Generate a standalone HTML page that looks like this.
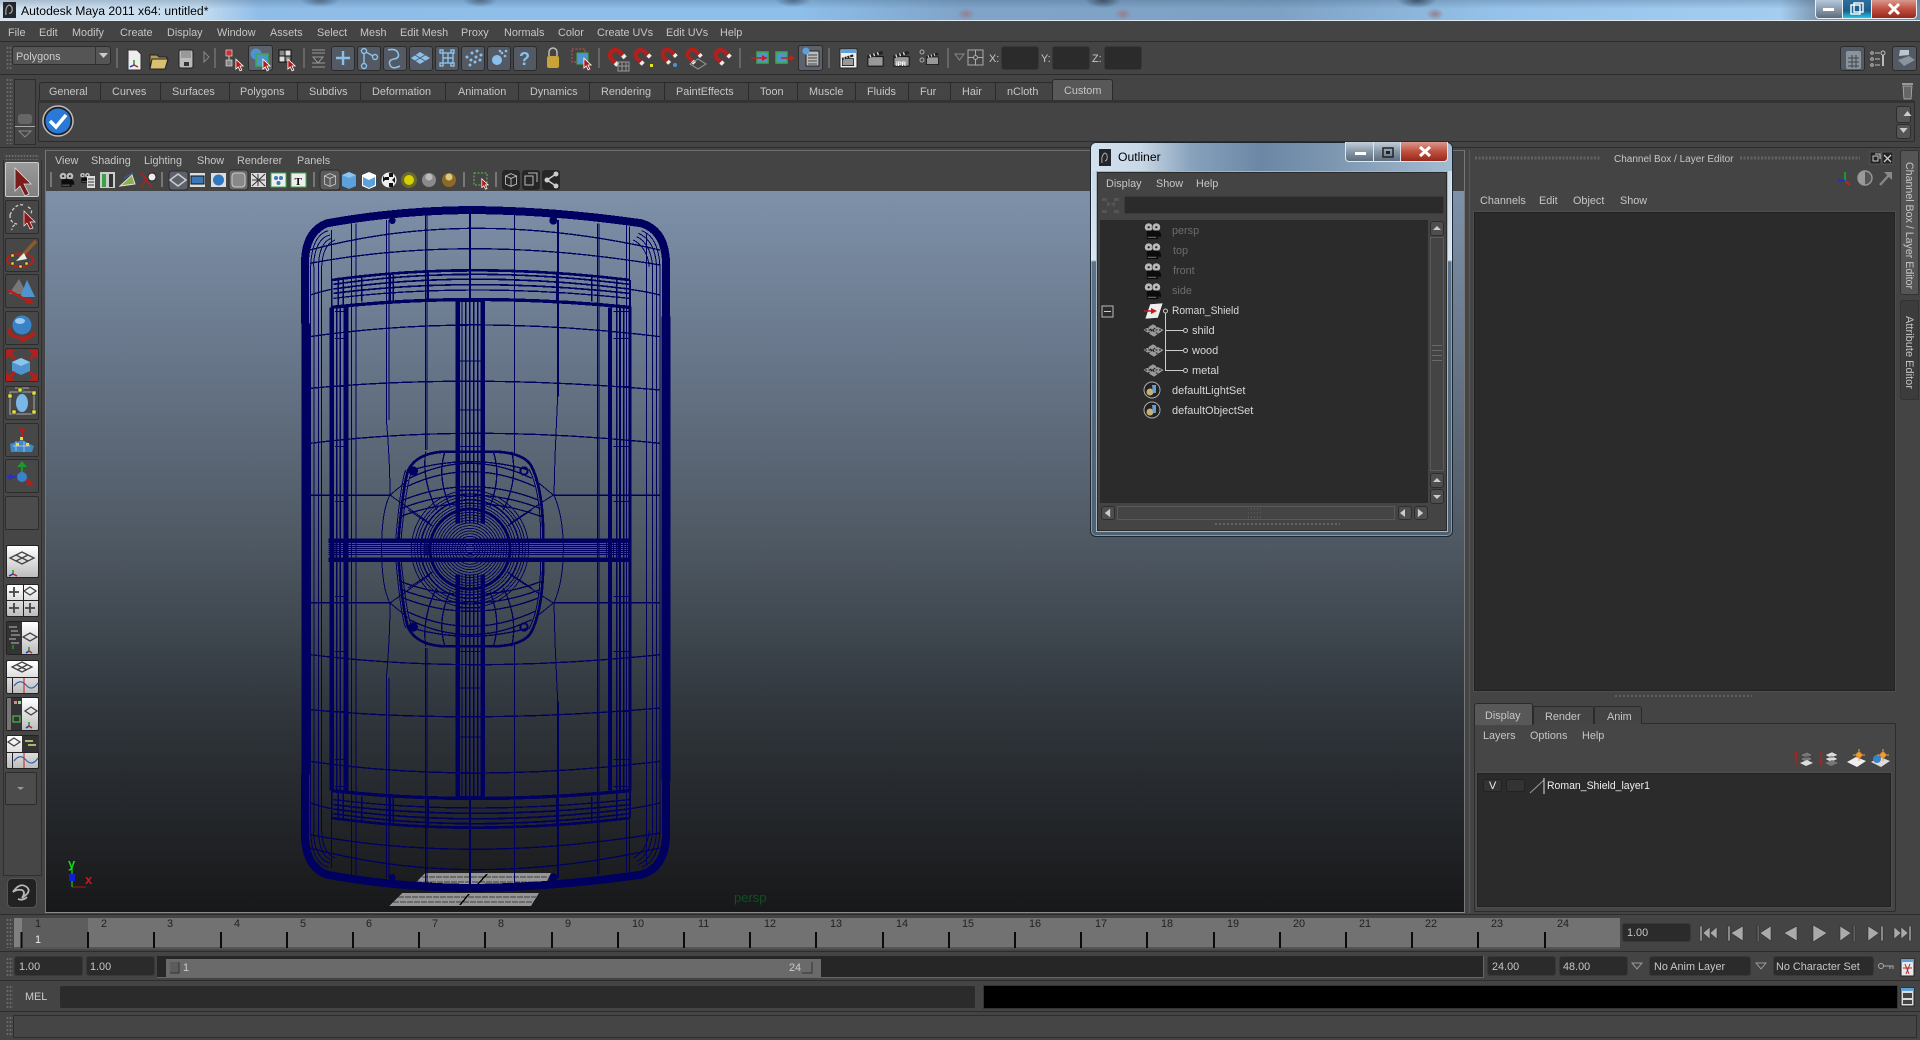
<!DOCTYPE html>
<html lang="en"><head><meta charset="utf-8"><title>Autodesk Maya 2011</title>
<style>
html,body{margin:0;padding:0;width:1920px;height:1040px;overflow:hidden;background:#444}
.a{position:absolute;box-sizing:border-box}
svg.o{position:absolute;left:0;top:0;width:1920px;height:1040px}
svg text{font:10.85px "Liberation Sans",sans-serif;fill:#c6c6c6}
svg text.d{fill:#222}
svg text.g{fill:#6c6c6c}
svg text.w{fill:#eee}
.f{background:#2b2b2b;border:1px solid #383838;border-radius:3px}
.b{background:#4b4b4b;border:1px solid #2d2d2d;border-radius:3px}
.tb{background:#535a63;border:1px solid #2b2b2b;border-radius:3px}
.grip{background-image:radial-gradient(#6a6a6a 0.8px,transparent 1px);background-size:3px 4px}
.ln{background:#2c2c2c}
.tab{top:82px;height:18px;background:#444;border-top:1px solid #2a2a2a;border-left:1px solid #2a2a2a}
.lay{left:6px;width:33px;background:linear-gradient(#fff,#bdbdbd);border:1px solid #222;border-radius:2px}
.tool{left:5px;width:34px;background:#474747;border:1px solid #2c2c2c;border-radius:2px}
</style></head><body>

<!-- title bar -->
<div class="a" style="left:0;top:0;width:1920px;height:21px;border-bottom:1px solid #dfe9f2;background:
radial-gradient(ellipse 20px 7px at 320px 0,#4f6a86,transparent),
radial-gradient(ellipse 18px 7px at 480px 0,#4f6a86,transparent),
radial-gradient(ellipse 18px 7px at 793px 0,#4f6a86,transparent),
radial-gradient(ellipse 18px 8px at 1103px 0,#3c5268,transparent),
radial-gradient(ellipse 20px 8px at 1417px 0,#3c5268,transparent),
radial-gradient(ellipse 9px 6px at 966px 14px,#96808e,transparent),
radial-gradient(ellipse 9px 6px at 1123px 14px,#96808e,transparent),
radial-gradient(ellipse 9px 6px at 1435px 14px,#96808e,transparent),
linear-gradient(rgba(60,90,120,.28),rgba(60,90,120,0) 9px),
linear-gradient(90deg,#d4e3ef 0,#c4dcf0 200px,#8fbde8 260px,#8ebeea 800px,#80a4c8 960px,#7ea2c4 1280px,#96c2ea 1500px,#a4cdf0 1780px,#7f9ab4 1815px,#6f8aa4 1920px)"></div>
<div class="a" style="left:1815px;top:0;width:28px;height:19px;background:linear-gradient(#b4c8dc,#8c9cac 50%,#5c6c7c);border:1px solid #e8f0f6;border-top:0;border-radius:0 0 0 4px"></div>
<div class="a" style="left:1843px;top:0;width:28px;height:19px;background:linear-gradient(#2f6f9f,#1c5d8a 60%,#20c8e8);border-bottom:1px solid #e8f0f6"></div>
<div class="a" style="left:1871px;top:0;width:46px;height:19px;background:linear-gradient(#d89a8c,#c05040 50%,#96281c);border:1px solid #e8f0f6;border-top:0;border-radius:0 0 4px 0"></div>

<!-- horizontal dividers -->
<div class="a ln" style="left:0;top:41px;width:1920px;height:1px"></div>
<div class="a ln" style="left:0;top:74px;width:1920px;height:1px"></div>
<div class="a ln" style="left:0;top:147px;width:1920px;height:1px"></div>
<div class="a" style="left:46px;top:150px;width:1418px;height:1px;background:#6e6e6e"></div>

<!-- toolbar pieces -->
<div class="a b" style="left:12px;top:46px;width:99px;height:19px;background:#555"></div>
<div class="a" style="left:95px;top:47px;width:1px;height:17px;background:#333"></div>
<div class="a grip" style="left:6px;top:46px;width:6px;height:24px"></div>
<div class="a tb" style="left:248px;top:45px;width:25px;height:26px;background:#5b626c"></div>
<div class="a tb" style="left:331px;top:46px;width:24px;height:25px"></div>
<div class="a tb" style="left:357px;top:46px;width:24px;height:25px"></div>
<div class="a tb" style="left:383px;top:46px;width:24px;height:25px"></div>
<div class="a tb" style="left:409px;top:46px;width:24px;height:25px"></div>
<div class="a tb" style="left:435px;top:46px;width:24px;height:25px"></div>
<div class="a tb" style="left:461px;top:46px;width:24px;height:25px"></div>
<div class="a tb" style="left:487px;top:46px;width:24px;height:25px"></div>
<div class="a tb" style="left:513px;top:46px;width:24px;height:25px"></div>
<div class="a tb" style="left:798px;top:45px;width:25px;height:26px;background:#5b626c"></div>
<div class="a f" style="left:1001px;top:46px;width:38px;height:24px"></div>
<div class="a f" style="left:1052px;top:46px;width:38px;height:24px"></div>
<div class="a f" style="left:1104px;top:46px;width:38px;height:24px"></div>
<div class="a tb" style="left:1840px;top:46px;width:25px;height:25px"></div>
<div class="a tb" style="left:1892px;top:46px;width:25px;height:25px"></div>

<!-- shelf -->
<div class="a grip" style="left:6px;top:78px;width:7px;height:66px"></div>
<div class="a" style="left:14px;top:79px;width:22px;height:66px;border:1px solid #2d2d2d;background:#464646"></div>
<div class="a" style="left:18px;top:114px;width:14px;height:10px;background:#666;border-radius:3px"></div>
<div class="a" style="left:15px;top:126px;width:20px;height:1px;background:#aaa"></div>
<div class="a tab" style="left:39px;width:62px;border-radius:3px 0 0 0"></div>
<div class="a tab" style="left:100px;width:61px"></div>
<div class="a tab" style="left:160px;width:70px"></div>
<div class="a tab" style="left:229px;width:69px"></div>
<div class="a tab" style="left:297px;width:64px"></div>
<div class="a tab" style="left:360px;width:86px"></div>
<div class="a tab" style="left:445px;width:74px"></div>
<div class="a tab" style="left:518px;width:72px"></div>
<div class="a tab" style="left:589px;width:76px"></div>
<div class="a tab" style="left:664px;width:85px"></div>
<div class="a tab" style="left:748px;width:50px"></div>
<div class="a tab" style="left:797px;width:59px"></div>
<div class="a tab" style="left:855px;width:54px"></div>
<div class="a tab" style="left:908px;width:43px"></div>
<div class="a tab" style="left:950px;width:46px"></div>
<div class="a tab" style="left:995px;width:58px"></div>
<div class="a" style="left:1052px;top:79px;width:61px;height:22px;background:#585858;border:1px solid #2a2a2a;border-bottom:0;border-radius:3px 3px 0 0"></div>
<div class="a" style="left:38px;top:100px;width:1877px;height:42px;border:1px solid #2c2c2c;border-top:3px solid #333;border-radius:2px;background:#444"></div>
<div class="a b" style="left:1896px;top:106px;width:15px;height:17px;background:#555"></div>
<div class="a b" style="left:1896px;top:124px;width:15px;height:15px;background:#555"></div>

<!-- viewport panel -->
<div class="a" style="left:46px;top:191px;width:1418px;height:721px;background:linear-gradient(#7e91a9 0,#667487 25%,#4d5761 50%,#30363c 72%,#1a1b1d 97%,#17181a 100%)"></div>
<div class="a" style="left:45px;top:150px;width:1px;height:763px;background:#777"></div>
<div class="a" style="left:1464px;top:150px;width:1px;height:763px;background:#777"></div>
<div class="a" style="left:45px;top:912px;width:1420px;height:1px;background:#8a8a8a"></div>

<!-- left tool column -->
<div class="a grip" style="left:5px;top:154px;width:34px;height:6px"></div>
<div class="a" style="left:3px;top:160px;width:39px;height:716px;border:1px solid #2f2f2f;border-top:0;background:#464646"></div>
<div class="a tool" style="top:162px;height:35px;background:linear-gradient(#9a9a9a,#808080);border-color:#ccc"></div>
<div class="a tool" style="top:200px;height:34px"></div>
<div class="a tool" style="top:238px;height:34px"></div>
<div class="a tool" style="top:274px;height:34px"></div>
<div class="a tool" style="top:311px;height:34px"></div>
<div class="a tool" style="top:348px;height:34px"></div>
<div class="a tool" style="top:386px;height:34px"></div>
<div class="a tool" style="top:423px;height:34px"></div>
<div class="a tool" style="top:459px;height:34px"></div>
<div class="a tool" style="top:496px;height:34px;background:#4c4c4c"></div>
<div class="a lay" style="top:545px;height:33px"></div>
<div class="a lay" style="top:584px;height:33px"></div>
<div class="a lay" style="top:621px;height:34px"></div>
<div class="a lay" style="top:660px;height:34px"></div>
<div class="a lay" style="top:697px;height:34px"></div>
<div class="a lay" style="top:735px;height:34px"></div>
<div class="a tool" style="top:772px;width:32px;height:33px;background:#4c4c4c"></div>
<div class="a" style="left:7px;top:878px;width:30px;height:30px;background:#222;border:1px solid #555;border-radius:5px"></div>

<!-- right panel -->
<div class="a" style="left:1469px;top:150px;width:1px;height:763px;background:#5a5a5a"></div>
<div class="a" style="left:1474px;top:212px;width:421px;height:479px;background:#2b2b2b;border:1px solid #222;outline:1px solid #4e4e4e"></div>
<div class="a" style="left:1900px;top:150px;width:19px;height:145px;background:#555;border:1px solid #333;border-radius:3px 0 0 3px"></div>
<div class="a" style="left:1900px;top:300px;width:19px;height:100px;background:#3c3c3c;border:1px solid #333;border-radius:3px 0 0 3px"></div>
<div class="a" style="left:1474px;top:723px;width:422px;height:189px;background:#464646;border:1px solid #2c2c2c;border-radius:2px"></div>
<div class="a" style="left:1474px;top:703px;width:59px;height:22px;background:#585858;border:1px solid #2a2a2a;border-bottom:0;border-radius:3px 3px 0 0"></div>
<div class="a" style="left:1533px;top:706px;width:61px;height:18px;background:#444;border:1px solid #2a2a2a;border-bottom:0;border-radius:0 3px 0 0"></div>
<div class="a" style="left:1594px;top:706px;width:48px;height:18px;background:#444;border:1px solid #2a2a2a;border-bottom:0;border-radius:0 3px 0 0"></div>
<div class="a" style="left:1477px;top:773px;width:414px;height:134px;background:#2b2b2b;border:1px solid #222;outline:1px solid #4e4e4e"></div>
<div class="a" style="left:1483px;top:779px;width:19px;height:13px;background:#333;border:1px solid #222;border-radius:3px"></div>
<div class="a" style="left:1506px;top:779px;width:19px;height:13px;background:#333;border:1px solid #222;border-radius:3px"></div>

<!-- timeline & range -->
<div class="a ln" style="left:0;top:914px;width:1920px;height:1px"></div>
<div class="a grip" style="left:6px;top:918px;width:7px;height:30px"></div>
<div class="a" style="left:14px;top:918px;width:1606px;height:31px;background:#727272;border-bottom:2px solid #555"></div>
<div class="a" style="left:14px;top:918px;width:8px;height:29px;background:#808080"></div>
<div class="a" style="left:22px;top:918px;width:66px;height:29px;background:#5d5d5d"></div>
<div class="a f" style="left:1622px;top:923px;width:69px;height:19px"></div>
<div class="a ln" style="left:0;top:951px;width:1920px;height:1px"></div>
<div class="a grip" style="left:6px;top:957px;width:7px;height:20px"></div>
<div class="a f" style="left:14px;top:956px;width:69px;height:20px"></div>
<div class="a f" style="left:86px;top:956px;width:69px;height:20px"></div>
<div class="a" style="left:157px;top:956px;width:1327px;height:22px;background:#262626;border-bottom:1px solid #666;border-right:1px solid #666"></div>
<div class="a" style="left:166px;top:959px;width:655px;height:18px;background:#6a6a6a"></div>
<div class="a f" style="left:1487px;top:956px;width:69px;height:20px"></div>
<div class="a f" style="left:1559px;top:956px;width:69px;height:20px"></div>
<div class="a f" style="left:1649px;top:956px;width:102px;height:20px"></div>
<div class="a f" style="left:1773px;top:956px;width:101px;height:20px"></div>
<div class="a ln" style="left:0;top:980px;width:1920px;height:1px"></div>
<div class="a grip" style="left:6px;top:985px;width:7px;height:24px"></div>
<div class="a f" style="left:59px;top:985px;width:917px;height:24px;border-color:#454545"></div>
<div class="a" style="left:983px;top:985px;width:915px;height:24px;background:#000;border:1px solid #333"></div>
<div class="a ln" style="left:0;top:1011px;width:1920px;height:1px"></div>
<div class="a grip" style="left:6px;top:1016px;width:7px;height:20px"></div>
<div class="a" style="left:13px;top:1015px;width:1904px;height:23px;border:1px solid #2d2d2d;background:#454545"></div>

<!-- main svg -->
<svg class="o" viewBox="0 0 1920 1040">
<defs>
<symbol id="cam" viewBox="0 0 20 20"><circle cx="6" cy="5.500" r="4.500" fill="#b8b8b8" stroke="#222" stroke-width=".6"/><circle cx="14" cy="5.500" r="4.500" fill="#b8b8b8" stroke="#222" stroke-width=".6"/><circle cx="6" cy="5.500" r="1.200" fill="#222"/><circle cx="14" cy="5.500" r="1.200" fill="#222"/><path d="M4 9h12l3 3v4l-3-1v3H4z" fill="#0c0c0c"/><path d="M5 16h9" stroke="#999" stroke-width=".8"/></symbol>
<symbol id="cur" viewBox="0 0 10 15"><path d="M1 1V12L3.600 9.600 5.600 14 7.600 13 5.600 8.600H9z" fill="#b01a1a" stroke="#fff" stroke-width=".9"/></symbol>
<symbol id="mag" viewBox="0 0 24 24"><g transform="rotate(-45 12 12)"><path d="M6 18V10a6 6 0 0 1 12 0v8" fill="none" stroke="#b3201c" stroke-width="5"/><path d="M6 16v4M18 16v4" stroke="#eee" stroke-width="5"/></g></symbol>
<symbol id="clap" viewBox="0 0 20 20"><path d="M2 8h16v10H2z" fill="#999" stroke="#111"/><path d="M1 7L17 2l1 3L2 10z" fill="#222"/><path d="M4 5.800l1 3M8 4.600l1 3M12 3.400l1 3" stroke="#ddd" stroke-width="1.400"/></symbol>
<symbol id="cube" viewBox="0 0 20 20"><path d="M10 2l7 3v10l-7 3-7-3V5z" fill="none" stroke="#ccc"/><path d="M3 5l7 3 7-3M10 8v10" fill="none" stroke="#ccc"/></symbol>
<g id="h" stroke="#000060" fill="none">
<path d="M75 400V215Q77 125 140 100Q350 62 570 60Q820 62 1085 100Q1155 122 1158 215V400" stroke-width="24"/>
<rect x="64" y="400" width="26" height="680" fill="#000060" stroke="none"/>
<rect x="1144" y="380" width="28" height="700" fill="#000060" stroke="none"/>
<circle cx="337" cy="92" r="10" fill="#000060" stroke="none"/><circle cx="820" cy="92" r="12" fill="#000060" stroke="none"/>
<g stroke-width="3">
<path d="M92 230Q95 135 145 122M100 230Q105 145 150 135M115 230Q118 155 155 145M125 230Q128 165 165 150M1140 230Q1135 140 1085 122M1130 230Q1125 150 1075 130M1118 230Q1112 160 1070 140M1108 230Q1100 170 1060 150"/>
<path d="M92 230V1077M102 230V1077M115 230V1077M125 230V1077M1140 230V1077M1130 230V1077M1118 230V1077M1100 130V1077"/>
<path d="M155 120V1077M215 100V1077M228 100V1077M320 90V700Q330 820 330 915Q305 960 305 1077M327 90V690M703 75V790M832 90V640L825 800 822 915Q850 980 850 1077M836 90V620M952 100V1077M957 100V1077M1040 100V1077M1048 110V1077"/>
</g>
<path d="M437 75V780M441 75V780" stroke-width="3"/>
<path d="M570 55V240" stroke-width="5"/>
<g stroke-width="4">
<path d="M90 180Q570 50 1140 180M90 220Q570 130 1140 225M90 315Q140 300 155 298M1050 298Q1100 305 1140 315"/>
<path d="M90 440Q570 370 1140 440M90 595Q570 550 1140 600M90 760Q570 700 1140 760M90 916H335M820 916H1140"/>
</g>
<g stroke-width="5">
<path d="M155 270Q570 212 1050 270" stroke-width="8"/>
<path d="M160 283Q570 223 1048 283M160 297Q570 238 1048 297M160 310Q570 258 1048 310"/>
<path d="M160 325Q570 275 1048 325" stroke-width="4"/>
<path d="M155 352Q570 305 1050 352" stroke-width="10"/>
</g>
<path d="M155 270V350M175 262V345M190 262V345M245 262V335M330 255V335M340 255V335M445 245V330M570 240V325M830 245V330M935 255V335M1010 262V345M1050 270V350" stroke-width="5"/>
<path d="M155 352V1077" stroke-width="14"/><path d="M170 352V1077M181 352V1077" stroke-width="5"/><path d="M198 350V1077" stroke-width="14"/>
<path d="M990 352V1077" stroke-width="13"/><path d="M1010 352V1077M1020 352V1077M1031 352V1077" stroke-width="5"/><path d="M1050 350V1077" stroke-width="9"/>
<path d="M165 365H205M165 445H195M165 590H205M165 770H205M165 935H205M1000 365H1048M1000 445H1048M1000 590H1048M1000 770H1048M1000 935H1048" stroke-width="3"/>
<path d="M533 330V1000" stroke-width="13"/><path d="M608 330V1000" stroke-width="13"/>
<path d="M546 330V1000M557 330V1000M569 330V1000M581 330V1000M593 330V1000" stroke-width="4"/>
<path d="M527 403H615M527 513H615M527 660H615M527 770H615M527 900H615M527 335H615" stroke-width="3"/>
<path d="M355 1050Q370 880 385 840Q410 790 490 785H650Q735 790 755 830Q790 900 790 1050" stroke-width="8"/>
<path d="M347 1050Q362 880 377 840M363 1050Q378 890 393 850M782 1050Q782 900 747 838" stroke-width="3"/>
<path d="M380 890Q570 800 765 890M370 930Q570 850 775 930M395 840Q570 790 745 840M360 980Q570 900 785 980M388 865Q570 775 755 865M365 955Q570 875 780 955" stroke-width="4"/>
<path d="M437 785Q425 870 470 960M495 785Q470 860 510 950M640 785Q665 860 630 950M695 785Q715 870 670 960" stroke-width="4"/>
<path d="M330 915L450 1000M330 915L385 870M820 915L690 1000M820 915L765 870M385 960L460 1010M755 960L680 1010" stroke-width="3"/>
<circle cx="400" cy="843" r="14" fill="#000060" stroke="none"/><circle cx="732" cy="843" r="11" stroke-width="6"/>
</g>
</defs>

<!-- title + menu text -->
<rect x="3" y="2" width="13" height="16" fill="#23272b"/><path d="M6 15Q5 7 9 5q4 1 3 6-1 3-3 2" fill="none" stroke="#aaa" stroke-width="1.200"/>
<text x="21" y="15" style="font-size:12.2px;fill:#000">Autodesk Maya 2011 x64: untitled*</text>
<g transform="translate(0,36)">
<text x="8">File</text><text x="39">Edit</text><text x="72">Modify</text><text x="120">Create</text><text x="167">Display</text><text x="217">Window</text><text x="270">Assets</text><text x="317">Select</text><text x="360">Mesh</text><text x="400">Edit Mesh</text><text x="461">Proxy</text><text x="504">Normals</text><text x="558">Color</text><text x="597">Create UVs</text><text x="666">Edit UVs</text><text x="720">Help</text>
</g>
<!-- window buttons -->
<rect x="1823" y="8" width="11" height="3" fill="#fff"/>
<rect x="1851" y="5" width="9" height="9" fill="none" stroke="#fff" stroke-width="1.400"/><rect x="1854" y="3" width="9" height="9" fill="none" stroke="#fff" stroke-width="1.400"/>
<path d="M1889 4l10 10M1899 4l-10 10" stroke="#fff" stroke-width="3"/>

<!-- toolbar icons -->
<text x="16" y="60" style="fill:#ccc">Polygons</text>
<path d="M99 53h9l-4.500 5z" fill="#ccc"/>
<rect x="116" y="48" width="2" height="20" fill="#666"/><rect x="214" y="48" width="2" height="20" fill="#666"/><rect x="303" y="48" width="2" height="20" fill="#666"/><rect x="598" y="48" width="2" height="20" fill="#666"/><rect x="739" y="48" width="2" height="20" fill="#666"/><rect x="828" y="48" width="2" height="20" fill="#666"/><rect x="947" y="48" width="2" height="20" fill="#666"/>
<path d="M128 50h9l4 4v16h-13z" fill="#eee" stroke="#333"/><path d="M134 60v5" stroke="#1a9a2a" stroke-width="1.500"/><path d="M134 65l-4 2" stroke="#2030c0" stroke-width="1.500"/><path d="M134 65l4 2" stroke="#c02020" stroke-width="1.500"/>
<path d="M150 55h7l2 2h8l-2 12h-15z" fill="#b79b52" stroke="#222"/><path d="M152 59h16l-3 10h-15z" fill="#d8c070" stroke="#222"/>
<rect x="179" y="50" width="14" height="18" rx="2" fill="#bbb" stroke="#222"/><rect x="181" y="51" width="10" height="7" fill="#999"/><rect x="184" y="62" width="5" height="4" fill="#333"/>
<path d="M204 52l5 5-5 5z" fill="none" stroke="#888"/>
<rect x="226" y="50" width="6" height="6" fill="#d03030" stroke="#eee" stroke-width=".6"/><rect x="226" y="60" width="6" height="6" fill="#888" stroke="#eee" stroke-width=".6"/><path d="M229 56v4" stroke="#ccc"/><use href="#cur" x="235" y="58" width="9" height="14"/>
<circle cx="256" cy="54" r="5.500" fill="#4f94cf"/><rect x="256" y="54" width="12" height="12" fill="#4f94cf" stroke="#3ea84a" stroke-width="1.500"/><use href="#cur" x="262" y="58" width="9" height="14"/>
<rect x="279" y="50" width="6" height="6" fill="#888" stroke="#111"/><rect x="285" y="50" width="6" height="6" fill="#ddd" stroke="#111"/><rect x="279" y="56" width="6" height="6" fill="#ddd" stroke="#111"/><rect x="285" y="56" width="6" height="6" fill="#888" stroke="#111"/><use href="#cur" x="287" y="58" width="9" height="14"/>
<path d="M312 50h13M312 53h13M312 63h13M312 67h13" stroke="#999"/><path d="M313 57h10l-5 6z" fill="none" stroke="#999"/>
<path d="M343 51v14M336 58h14" stroke="#8cc0ea" stroke-width="2.400"/>
<g fill="none" stroke="#8cc0ea" stroke-width="1.400"><circle cx="364" cy="51" r="2.500"/><circle cx="375" cy="57" r="2.500"/><circle cx="364" cy="66" r="2.500"/><path d="M366 52l7 4M364 54v9"/>
<path d="M388 50q8-2 10 3t-4 6-4 6 10 1" stroke-width="1.600"/>
<rect x="443" y="53" width="10" height="10"/><rect x="440" y="50" width="3" height="3"/><rect x="451" y="50" width="3" height="3"/><rect x="440" y="63" width="3" height="3"/><rect x="451" y="63" width="3" height="3"/><path d="M448 53v10M443 58h10"/></g>
<path d="M411 58l9-6 10 6-10 6z" fill="#8cc0ea"/><path d="M415 55l10 6M425 55l-10 6" stroke="#555c66"/>
<g fill="#8cc0ea"><circle cx="467" cy="57" r="1.500"/><circle cx="472" cy="53" r="1.500"/><circle cx="477" cy="51" r="1.500"/><circle cx="471" cy="60" r="1.500"/><circle cx="476" cy="57" r="1.500"/><circle cx="481" cy="55" r="1.500"/><circle cx="470" cy="65" r="1.500"/><circle cx="475" cy="62" r="1.500"/><circle cx="480" cy="60" r="1.500"/><circle cx="497" cy="60" r="5"/><circle cx="502" cy="53" r="1.300"/><circle cx="506" cy="51" r="1.300"/><circle cx="505" cy="56" r="1.300"/><circle cx="500" cy="51" r="1.300"/></g>
<text x="519" y="65" style="font:bold 18px 'Liberation Sans';fill:#8cc0ea">?</text>
<path d="M549 56v-4a4 4 0 0 1 8 0v4" fill="none" stroke="#bdbdbd" stroke-width="1.500"/><rect x="547" y="56" width="12" height="12" rx="2" fill="#c9a33a"/>
<rect x="572" y="49" width="13" height="13" fill="none" stroke="#d05050" stroke-dasharray="2 1.500"/><rect x="577" y="53" width="11" height="11" fill="#4f94cf" stroke="#3ea84a"/><use href="#cur" x="583" y="57" width="9" height="14"/>
<use href="#mag" x="606" y="46" width="21" height="21"/><path d="M618 62h11v9h-11zM622 62v9M626 62v9M618 66h11" fill="none" stroke="#999"/>
<use href="#mag" x="632" y="46" width="20" height="20"/><rect x="650" y="64" width="3" height="3" fill="#e8e020"/>
<use href="#mag" x="659" y="46" width="19" height="19"/><circle cx="675" cy="65" r="2" fill="#4f94cf"/>
<use href="#mag" x="684" y="46" width="19" height="19"/><path d="M690 64l8-5 8 5-8 5z" fill="none" stroke="#999"/>
<use href="#mag" x="712" y="46" width="20" height="20"/>
<rect x="757" y="52" width="11" height="11" fill="#4f94cf" stroke="#3ea84a" stroke-width="1.500"/><path d="M751 58h16" stroke="#c02020" stroke-width="1.500"/><path d="M762 55l5 3-5 3z" fill="#c02020"/>
<rect x="776" y="52" width="11" height="11" fill="#4f94cf" stroke="#3ea84a" stroke-width="1.500"/><path d="M781 58h13" stroke="#c02020" stroke-width="1.500"/><path d="M790 55l5 3-5 3z" fill="#c02020"/>
<rect x="806" y="51" width="13" height="15" fill="#bbb" stroke="#222"/><path d="M808 55h9M808 58h9M808 61h9M808 64h9" stroke="#444"/><circle cx="806" cy="51" r="3.500" fill="#5ea0dc"/>
<rect x="840" y="49" width="17" height="19" fill="#eee" stroke="#222"/><rect x="841" y="50" width="15" height="3" fill="#5ea0dc"/><use href="#clap" x="841" y="53" width="14" height="14"/>
<use href="#clap" x="866" y="49" width="19" height="19"/>
<use href="#clap" x="892" y="49" width="19" height="19"/><text x="896" y="66" style="font:bold 6px 'Liberation Sans';fill:#fff">IPR</text>
<use href="#clap" x="925" y="49" width="15" height="19"/><circle cx="922" cy="52" r="2" fill="none" stroke="#aaa"/><circle cx="922" cy="60" r="2" fill="none" stroke="#aaa"/>
<path d="M955 54h9l-4.500 6z" fill="none" stroke="#888"/>
<rect x="968" y="50" width="15" height="15" fill="none" stroke="#aaa"/><path d="M975.500 50v15M968 57.500h15" stroke="#aaa"/><circle cx="975.500" cy="57.500" r="2" fill="#444" stroke="#aaa"/>
<text x="989" y="62">X:</text><text x="1041" y="62">Y:</text><text x="1092" y="62">Z:</text>
<rect x="1846" y="51" width="15" height="18" rx="2" fill="#8a949e"/><path d="M1848 58h11M1848 62h11M1848 66h11M1852 55v13M1856 55v13" stroke="#444"/>
<g fill="none" stroke="#bbb"><circle cx="1872" cy="53" r="1.300"/><circle cx="1872" cy="59" r="1.300"/><circle cx="1872" cy="65" r="1.300"/><path d="M1875 53h5M1875 59h5M1875 65h5"/><path d="M1883 55v11" stroke-width="2"/><circle cx="1883" cy="53" r="2"/></g>
<path d="M1898 60l11-4 6 4-11 6z" fill="#8a949e"/><path d="M1899 56l10-1v-5h-9z" fill="#bcc6d0"/>
<path d="M1903 86h9l-1 13h-7z" fill="#666" stroke="#bbb" stroke-width=".7"/><rect x="1902" y="83" width="11" height="2" fill="#999"/>
<path d="M1903.500 111l4-5 4 5z" fill="#ccc" transform="translate(0,5)"/><path d="M1899.500 128h8l-4 5z" fill="#ccc"/>

<!-- shelf text -->
<g transform="translate(0,95)">
<text x="49">General</text><text x="112">Curves</text><text x="172">Surfaces</text><text x="240">Polygons</text><text x="309">Subdivs</text><text x="372">Deformation</text><text x="458">Animation</text><text x="530">Dynamics</text><text x="601">Rendering</text><text x="676">PaintEffects</text><text x="760">Toon</text><text x="809">Muscle</text><text x="867">Fluids</text><text x="920">Fur</text><text x="962">Hair</text><text x="1007">nCloth</text><text x="1064" y="-1">Custom</text>
</g>
<circle cx="58" cy="121" r="15" fill="#222" stroke="#bcbcbc" stroke-width="1.500"/><circle cx="58" cy="121" r="12.500" fill="#2a78d8"/><path d="M50 121l6 6 10-12" fill="none" stroke="#fff" stroke-width="3.500"/>
<path d="M19 131h12l-6 6z" fill="none" stroke="#888"/>

<!-- viewport menu -->
<g transform="translate(0,164)">
<text x="55">View</text><text x="91">Shading</text><text x="144">Lighting</text><text x="197">Show</text><text x="237">Renderer</text><text x="297">Panels</text>
</g>
<g fill="#777"><rect x="50" y="172" width="2" height="15"/><rect x="161" y="172" width="2" height="15"/><rect x="313" y="172" width="2" height="15"/><rect x="463" y="172" width="2" height="15"/><rect x="495" y="172" width="2" height="15"/></g>
<use href="#cam" x="58" y="171" width="17" height="18"/>
<use href="#cam" x="79" y="171" width="12" height="14"/><rect x="87" y="176" width="8" height="12" fill="#ddd"/><path d="M88 179h6M88 182h6M88 185h6" stroke="#333"/>
<rect x="100" y="172" width="15" height="16" fill="#ccc"/><rect x="102" y="174" width="4" height="13" fill="#3aa04a"/><rect x="109" y="174" width="4" height="13" fill="#333"/>
<path d="M120 186l12-11 3 9z" fill="#8ab04a" stroke="#ddd"/><path d="M124 178l9-5" stroke="#4060c0"/>
<path d="M141 172l11 16M151 172l-10 16" stroke="#b02020" stroke-width="1.500"/><circle cx="152" cy="177" r="4" fill="#eee" stroke="#222"/>
<rect x="169" y="171" width="19" height="19" rx="3" fill="#5b626c" stroke="#2b2b2b"/><path d="M178 174l8 6-8 6-8-6z" fill="none" stroke="#ccc" stroke-width="1.500"/>
<rect x="190" y="173" width="15" height="14" fill="#ddd"/><rect x="191" y="176" width="13" height="8" fill="#3a78b8" stroke="#111"/>
<rect x="211" y="173" width="15" height="14" fill="#ddd"/><circle cx="218.500" cy="180" r="5.500" fill="#2f78c0"/>
<rect x="229" y="170" width="19" height="20" rx="3" fill="#6b6b6b" stroke="#2b2b2b"/><rect x="232" y="173" width="13" height="14" rx="3" fill="#888" stroke="#ccc"/>
<rect x="251" y="173" width="15" height="14" fill="#ddd"/><path d="M252 174l13 12M265 174l-13 12M252 180h13M258 174v12" stroke="#333"/>
<rect x="271" y="173" width="15" height="14" fill="#eee" stroke="#3ea84a"/><circle cx="276" cy="178" r="2" fill="#3a78b8"/><circle cx="281" cy="178" r="2" fill="#3a78b8"/><circle cx="278.500" cy="183" r="2" fill="#3a78b8"/>
<rect x="291" y="173" width="15" height="14" fill="#eee" stroke="#3ea84a"/><text x="294.500" y="185" style="font:bold 11px 'Liberation Serif';fill:#111">T</text>
<rect x="320" y="170" width="20" height="20" rx="3" fill="#5b5b5b" stroke="#2b2b2b"/><use href="#cube" x="322" y="172" width="16" height="16"/>
<path d="M349 172l7 3v11l-7 3-7-3V175z" fill="#5ea0dc"/><path d="M342 175l7 3 7-3-7-3z" fill="#8cc4ee"/>
<path d="M369 172l7 3v11l-7 3-7-3V175z" fill="#fff"/><path d="M363 177l6 3v8l-6-3zM369 180l6-3v8l-6 3z" fill="#5ea0dc"/>
<circle cx="389" cy="180" r="7.500" fill="#eee"/><path d="M383 176l3 3-3 3zM389 173v4h4v-4zM389 183v4h4v-4zM395 177l-3 3 3 3z" fill="#111"/><rect x="385" y="177" width="4" height="3" fill="#111"/>
<circle cx="409" cy="180" r="5" fill="#e8e000"/><circle cx="409" cy="180" r="8" fill="#b8b000" opacity=".35"/>
<circle cx="429" cy="180" r="7" fill="#8a8a8a"/><circle cx="429" cy="177" r="3.500" fill="#bbb"/>
<circle cx="449" cy="180" r="7" fill="#8a6a24"/><circle cx="449" cy="177" r="3.500" fill="#e0c880"/>
<rect x="474" y="173" width="13" height="12" fill="none" stroke="#5cc050" stroke-dasharray="2 1.500"/><use href="#cur" x="481" y="178" width="8" height="12"/>
<rect x="502" y="170" width="18" height="20" rx="3" fill="#262626"/><use href="#cube" x="503" y="172" width="16" height="16"/>
<rect x="522" y="170" width="18" height="20" rx="3" fill="#262626"/><path d="M525 176h8v9h-8zM528 173h9v9" fill="none" stroke="#bbb"/>
<rect x="542" y="170" width="18" height="20" rx="3" fill="#262626"/><path d="M547 180l9-6M547 180l9 6" stroke="#ccc" stroke-width="1.500"/><circle cx="547" cy="180" r="2.500" fill="#ccc"/><circle cx="556" cy="174" r="2.500" fill="#ccc"/><circle cx="556" cy="186" r="2.500" fill="#ccc"/>

<!-- left tool icons -->
<path d="M15 168V191L20 186 25 196 29 194 24 184H31z" fill="#7a1c1c" stroke="#ddd" stroke-width=".8"/>
<path d="M10 215q5-12 14-10M10 215q0 8 7 9-6 2-5 6M28 207q6 3 2 8" fill="none" stroke="#ccc" stroke-dasharray="3 2" stroke-width="1.300"/><path d="M24 211v15l3-3 3 6 3-1-3-6h5z" fill="#8a1818" stroke="#eee" stroke-width=".7"/>
<ellipse cx="20" cy="260" rx="13" ry="6.500" fill="none" stroke="#b3201c" stroke-width="2"/><path d="M36 241L20 258" stroke="#8a5a30" stroke-width="3.500"/><path d="M24 253l-8 8 11-2z" fill="#eee"/><g fill="#e8e040" stroke="#222" stroke-width=".5"><rect x="11" y="262" width="3" height="3"/><rect x="25" y="262" width="3" height="3"/><rect x="11" y="254" width="3" height="3"/><rect x="19" y="265" width="3" height="3"/></g>
<path d="M9 294l10-15 8 15z" fill="#777"/><path d="M20 297l7-17 8 17z" fill="#4f94cf"/><path d="M8 290l22 12" stroke="#b3201c" stroke-width="2.500"/><path d="M34 304l-9-1 4-6z" fill="#b3201c"/>
<circle cx="22" cy="325" r="9.500" fill="#3a82c8"/><ellipse cx="20" cy="321" rx="5" ry="3" fill="#9cc8ee"/><path d="M9 332q13 12 26 0-2 5-10 7M10 328q-3 6 4 9" fill="none" stroke="#b3201c" stroke-width="2.500"/><path d="M18 340l8 2-2-6z" fill="#b3201c"/>
<path d="M21 358l9 4v9l-9 4-9-4V362z" fill="#4f94cf"/><path d="M12 362l9 4 9-4-9-4z" fill="#8cc4ee"/><g stroke="#b3201c" stroke-width="3"><path d="M9 353l6 6M36 353l-6 6M9 378l6-6M36 378l-6-6"/></g><g fill="#b3201c"><path d="M6 350h9l-9 9zM38 350h-9l9 9zM6 381v-9l9 9zM38 381v-9l-9 9z"/></g>
<path d="M10 392h24v22H10z" fill="none" stroke="#aaa"/><path d="M15 388h14" stroke="#aaa"/><ellipse cx="22" cy="403" rx="6" ry="9" fill="#7ab8e8"/><path d="M22 392v-3" stroke="#1a9a2a" stroke-width="3"/><g fill="#e8e040" stroke="#222" stroke-width=".5"><rect x="18" y="388" width="4" height="4"/><rect x="32" y="391" width="4" height="4"/><rect x="8" y="394" width="4" height="4"/><rect x="32" y="410" width="4" height="4"/><rect x="12" y="410" width="4" height="4"/></g>
<path d="M22 443v-14" stroke="#b3201c" stroke-width="2"/><path d="M18 432l4-5 4 5z" fill="#b3201c"/><path d="M10 444l12-4 12 6-2 6H11z" fill="#3f88c8"/><path d="M13 446h17M16 441v10M24 441v11" stroke="#cce" stroke-width=".7"/><g fill="#e8e040"><rect x="20" y="437" width="3" height="3"/><rect x="16" y="443" width="3" height="3"/><rect x="26" y="443" width="3" height="3"/></g>
<circle cx="22" cy="477" r="5" fill="#3a82c8"/><path d="M22 472v-8" stroke="#1a9a2a" stroke-width="2"/><path d="M17 467l5-6 5 6z" fill="#1a9a2a"/><path d="M17 477H8" stroke="#2a30c0" stroke-width="2"/><path d="M12 473l-6 4 6 4z" fill="#2a30c0"/><path d="M26 480l6 4" stroke="#b3201c" stroke-width="2"/><path d="M29 479l5 7-8 0z" fill="#b3201c"/>
<!-- layout icons -->
<g fill="none" stroke="#444" stroke-width="1.300"><path d="M22 552l12 6-12 6-12-6zM16 555l12 6M28 555l-12 6"/>
<path d="M30 587l6 4-6 4-6-4z"/>
<path d="M30 633l7 4-7 4-7-4z"/><path d="M22 662l10 5-10 5-10-5zM17 665l10 5M27 665l-10 5"/><path d="M31 707l6 4-6 4-6-4z"/><path d="M14 738l6 4-6 4-6-4z"/></g>
<g stroke="#444" stroke-width="1.800"><path d="M9 592h10M14 587v10M9 608h10M14 603v10M25 608h10M30 603v10"/></g>
<rect x="23" y="585" width="1" height="31" fill="#222"/><rect x="7" y="600" width="32" height="1" fill="#222"/>
<rect x="7" y="622" width="15" height="32" fill="#333"/><path d="M9 627h8M11 631h7M11 635h9M9 639h7M11 643h8" stroke="#bbb"/>
<rect x="7" y="677" width="32" height="1" fill="#222"/><rect x="12" y="678" width="1" height="15" fill="#222"/><path d="M14 686q6-8 12-1t12-2" fill="none" stroke="#36a" stroke-width="1.200"/><path d="M24 678v15" stroke="#c02020"/>
<rect x="7" y="698" width="15" height="32" fill="#333"/><rect x="7" y="698" width="4" height="32" fill="#777"/><rect x="14" y="701" width="3" height="3" fill="#d88"/><rect x="18" y="701" width="3" height="3" fill="#8d8"/><rect x="13" y="716" width="7" height="6" fill="none" stroke="#5c5"/>
<rect x="22" y="736" width="17" height="16" fill="#333"/><path d="M25 741h8M28 745h8" stroke="#dd8" stroke-width="1.500"/><rect x="7" y="752" width="32" height="1" fill="#222"/><rect x="12" y="753" width="1" height="15" fill="#222"/><path d="M14 761q6-8 12-1t12-2" fill="none" stroke="#36a" stroke-width="1.200"/><path d="M24 753v15" stroke="#c02020"/>
<g stroke-width="1.500"><path d="M13 574v-4" stroke="#1a9a2a"/><path d="M13 574l-4 2" stroke="#2030c0"/><path d="M13 574l4 2" stroke="#c02020"/><path d="M13 649v-4" stroke="#1a9a2a"/><path d="M29 651v-4" stroke="#1a9a2a"/><path d="M29 651l-3 2" stroke="#2030c0"/><path d="M29 651l3 2" stroke="#c02020"/><path d="M29 726v-4" stroke="#1a9a2a"/><path d="M29 726l-3 2" stroke="#2030c0"/><path d="M29 726l3 2" stroke="#c02020"/></g>
<path d="M17 787h7l-3.500 3z" fill="#999"/>
<path d="M13 892q6-9 12-6 6 3 2 8l-5 4q4-6 0-8-5-1-9 2zM18 899q5 2 9-2" fill="none" stroke="#b8b8b8" stroke-width="1.800"/>

<!-- viewport 3d contents -->
<g shape-rendering="crispEdges">
<path d="M425 873H551L545 885 412 887z" fill="#969696"/><path d="M402 893H539L531 906H389z" fill="#969696"/>
<g stroke="#3f3f3f" stroke-dasharray="6 1"><path d="M422 877H548M416 882H546M398 897H536M393 902H534"/></g>
<path d="M487 874L478 884M469 894L460 905" stroke="#000" stroke-width="1.400"/>
</g>
<g transform="translate(280,190) scale(.33333)" shape-rendering="crispEdges">
<use href="#h"/>
<use href="#h" transform="matrix(1,0,0,-1,0,2154)"/>
<g stroke="#000060" fill="none">
<g stroke-width="2.800"><circle cx="570" cy="1077" r="14"/><circle cx="570" cy="1077" r="22"/><circle cx="570" cy="1077" r="30"/><circle cx="570" cy="1077" r="38"/><circle cx="570" cy="1077" r="46"/><circle cx="570" cy="1077" r="54"/><circle cx="570" cy="1077" r="62"/><circle cx="570" cy="1077" r="70"/><circle cx="570" cy="1077" r="78"/><circle cx="570" cy="1077" r="86"/><circle cx="570" cy="1077" r="94"/><circle cx="570" cy="1077" r="102"/><circle cx="570" cy="1077" r="110"/><circle cx="570" cy="1077" r="130"/><circle cx="570" cy="1077" r="138"/><circle cx="570" cy="1077" r="158"/><circle cx="570" cy="1077" r="166"/><circle cx="570" cy="1077" r="176"/></g>
<circle cx="570" cy="1077" r="120" stroke-width="9"/>
<circle cx="570" cy="1077" r="148" stroke-width="5"/>
</g>
<rect x="145" y="1045" width="910" height="14" fill="#000060"/>
<rect x="145" y="1102" width="910" height="14" fill="#000060"/>
<g stroke="#000060" stroke-width="3"><path d="M145 1064H1055M145 1070H1055M145 1076H1055M145 1082H1055M145 1088H1055M145 1094H1055"/></g>
<g stroke="#000060" stroke-width="3"><path d="M165 1045V1116M178 1045V1116M190 1045V1116M202 1045V1116M980 1045V1116M1000 1045V1116M1015 1045V1116M1030 1045V1116M1045 1045V1116"/></g>
<rect x="430" y="1060" width="22" height="36" fill="#000060" opacity=".7"/>
</g>
<text x="734" y="902" style="font-size:13px;fill:#0e5122">persp</text>
<path d="M72 887h14" stroke="#c01010"/><path d="M72 866v21" stroke="#10d010" stroke-width="1.200"/>
<rect x="69" y="874" width="6" height="7" fill="#1020d0"/>
<text x="68" y="868" style="font:bold 13px 'Liberation Sans';fill:#0fdc0f">y</text>
<text x="85" y="884" style="font:bold 13px 'Liberation Sans';fill:#e01010">x</text>

<!-- right panel text -->
<g stroke="#626262" stroke-dasharray="2 1.500" stroke-width="3"><path d="M1475 158H1600M1740 158H1860"/></g>
<text x="1614" y="162" style="font-size:10px">Channel Box / Layer Editor</text>
<rect x="1870" y="152" width="11" height="12" fill="#222" stroke="#555"/><path d="M1873 156h5v5h-5zM1875 154h5v5" fill="none" stroke="#ccc"/>
<rect x="1882" y="152" width="11" height="12" fill="#222" stroke="#555"/><path d="M1884 155l7 7M1891 155l-7 7" stroke="#ccc" stroke-width="1.300"/>
<path d="M1845 172v9" stroke="#1a9a2a" stroke-width="2"/><path d="M1845 181l-7-1" stroke="#2030c0" stroke-width="2"/><path d="M1845 181l5 4" stroke="#c02020" stroke-width="2"/>
<circle cx="1865" cy="178" r="7" fill="#555" stroke="#999" stroke-width="1.400"/><path d="M1865 171a7 7 0 0 0 0 14z" fill="#9a9a9a"/>
<path d="M1880 185l10-11" stroke="#888" stroke-width="2.400"/><path d="M1884 172h8v8z" fill="#888"/>
<text x="1480" y="204">Channels</text><text x="1539" y="204">Edit</text><text x="1573" y="204">Object</text><text x="1620" y="204">Show</text>
<text transform="translate(1906,162) rotate(90)" style="font-size:11px" textLength="127" lengthAdjust="spacingAndGlyphs">Channel Box / Layer Editor</text>
<text transform="translate(1906,316) rotate(90)" style="font-size:11px" textLength="73" lengthAdjust="spacingAndGlyphs">Attribute Editor</text>
<path d="M1615 696H1752" stroke="#5f5f5f" stroke-width="2" stroke-dasharray="2 2"/>
<text x="1485" y="719">Display</text><text x="1545" y="720">Render</text><text x="1607" y="720">Anim</text>
<text x="1483" y="739">Layers</text><text x="1530" y="739">Options</text><text x="1582" y="739">Help</text>
<path d="M1796 751v14" stroke="#b3201c" stroke-width="1.300"/><path d="M1794 755l2-5 2 5z" fill="#b3201c"/><path d="M1800 755l7-3 6 3-7 3zM1800 759l7-3 6 3-7 3z" fill="#777" stroke="#222" stroke-width=".4"/><path d="M1800 763l7-3 6 3-7 3z" fill="#ddd"/>
<path d="M1821 751v14" stroke="#b3201c" stroke-width="1.300"/><path d="M1819 761l2 5 2-5z" fill="#b3201c"/><path d="M1825 755l7-3 6 3-7 3zM1825 759l7-3 6 3-7 3z" fill="#ddd" stroke="#222" stroke-width=".4"/><path d="M1825 763l7-3 6 3-7 3z" fill="#777"/>
<path d="M1847 762l9-5 10 4-9 6z" fill="#eee"/><circle cx="1859" cy="755" r="3" fill="#f09020"/><path d="M1859 749v12M1853 755h12" stroke="#f0a040"/>
<path d="M1871 762l9-5 10 4-9 6z" fill="#ddd"/><circle cx="1877" cy="759" r="4" fill="#3a82c8"/><circle cx="1883" cy="755" r="3" fill="#f09020"/><path d="M1883 749v12M1877 755h12" stroke="#f0a040"/>
<text x="1489" y="789" class="w">V</text>
<path d="M1530 793l14-13" stroke="#999"/><path d="M1544 778v16" stroke="#ddd"/>
<text x="1547" y="789" class="w" textLength="103" lengthAdjust="spacingAndGlyphs">Roman_Shield_layer1</text>

<!-- timeline -->
<g stroke="#0a0a0a" stroke-width="2"><path d="M21.500 932v16M88 932v16M154 932v16M221 932v16M287 932v16M353 932v16M419 932v16M485 932v16M552 932v16M618 932v16M684 932v16M750 932v16M816 932v16M883 932v16M949 932v16M1015 932v16M1081 932v16M1147 932v16M1214 932v16M1280 932v16M1346 932v16M1412 932v16M1478 932v16M1545 932v16"/></g>
<g transform="translate(0,927)">
<text class="d" x="35">1</text><text class="d" x="101">2</text><text class="d" x="167">3</text><text class="d" x="234">4</text><text class="d" x="300">5</text><text class="d" x="366">6</text><text class="d" x="432">7</text><text class="d" x="498">8</text><text class="d" x="565">9</text><text class="d" x="632">10</text><text class="d" x="698">11</text><text class="d" x="764">12</text><text class="d" x="830">13</text><text class="d" x="896">14</text><text class="d" x="962">15</text><text class="d" x="1029">16</text><text class="d" x="1095">17</text><text class="d" x="1161">18</text><text class="d" x="1227">19</text><text class="d" x="1293">20</text><text class="d" x="1359">21</text><text class="d" x="1425">22</text><text class="d" x="1491">23</text><text class="d" x="1557">24</text>
</g>
<text x="35" y="943" class="w">1</text>
<text x="1627" y="936">1.00</text>
<g fill="#aaa" stroke="#222" stroke-width=".5">
<rect x="1700" y="926" width="2" height="15"/><path d="M1710 927l-7 6 7 6zM1717 927l-7 6 7 6z"/>
<rect x="1728" y="926" width="2" height="15"/><path d="M1743 926l-12 7 12 8z"/>
<rect x="1757" y="925" width="2" height="17" fill="#777"/><path d="M1771 926l-11 7 11 8z"/>
<path d="M1797 926l-13 7 13 8z"/><path d="M1813 925l14 8-14 9z"/>
<path d="M1840 926l11 7-11 8z"/><rect x="1853" y="925" width="2" height="17" fill="#777"/>
<path d="M1868 926l11 7-11 8z"/><rect x="1881" y="926" width="2" height="15"/>
<path d="M1894 927l7 6-7 6zM1901 927l7 6-7 6z"/><rect x="1909" y="926" width="2" height="15"/>
</g>
<path d="M1757.500 925v17M1853.500 925v17" stroke="#c01818"/>
<!-- range -->
<text x="19" y="970">1.00</text><text x="90" y="970">1.00</text>
<path d="M170 962h9v11h-9" fill="#5c5c5c"/><path d="M179 962v11h-9" fill="none" stroke="#333"/>
<text x="183" y="971" class="w" style="fill:#ccc">1</text><text x="789" y="971" style="fill:#ccc">24</text>
<path d="M812 962v11h-10" fill="none" stroke="#333"/>
<text x="1492" y="970">24.00</text><text x="1563" y="970">48.00</text>
<path d="M1632 963h10l-5 6z" fill="none" stroke="#999"/><path d="M1756 963h10l-5 6z" fill="none" stroke="#999"/>
<text x="1654" y="970">No Anim Layer</text><text x="1776" y="970">No Character Set</text>
<circle cx="1881" cy="966" r="2.500" fill="none" stroke="#aaa"/><path d="M1884 966h9v3M1890 966v3" fill="none" stroke="#aaa"/>
<rect x="1901" y="959" width="13" height="17" fill="#e8e8e8" stroke="#222"/><rect x="1901" y="959" width="13" height="3" fill="#5ea0dc"/><path d="M1903 968h9M1905 964l4 10M1910 964l-4 10" stroke="#b02828"/>
<text x="25" y="1000" style="fill:#ccc">MEL</text>
<rect x="1901" y="988" width="13" height="18" fill="#ddd" stroke="#222"/><rect x="1901" y="988" width="13" height="3" fill="#5ea0dc"/><rect x="1903" y="993" width="9" height="5" fill="#444"/><rect x="1903" y="1000" width="9" height="4" fill="#444"/>
</svg>

<!-- Outliner window -->
<div class="a" style="left:1090px;top:142px;width:363px;height:395px;border:1px solid #1d2630;border-radius:6px;background:linear-gradient(#c6d6e6 0,#d8e6f2 117px,#5c728a 119px,#4e6172 100%);box-shadow:inset 0 0 0 1px rgba(255,255,255,.35)"></div>
<div class="a" style="left:1091px;top:143px;width:361px;height:28px;border-radius:5px 5px 0 0;background:linear-gradient(90deg,#d4e1ee 0,#c8d8e6 50px,#88a2bc 100px,#6b87a5 170px,#7c96b0 240px,#a4bcd2 361px)"></div>
<div class="a" style="left:1345px;top:142px;width:29px;height:20px;background:linear-gradient(#c4cfda,#8898a8 50%,#5e6f80);border:1px solid #dfe8f0;border-top:0;border-radius:0 0 0 4px"></div>
<div class="a" style="left:1374px;top:142px;width:26px;height:20px;background:linear-gradient(#c4cfda,#8898a8 50%,#5e6f80);border-bottom:1px solid #dfe8f0"></div>
<div class="a" style="left:1400px;top:142px;width:48px;height:20px;background:linear-gradient(#d89a8c,#c05040 50%,#96281c);border:1px solid #dfe8f0;border-top:0;border-radius:0 0 4px 0"></div>
<div class="a" style="left:1096px;top:171px;width:352px;height:361px;background:#444;border:1px solid #a8b4c0;box-shadow:inset 0 0 0 1px #2a2a2a"></div>
<div class="a" style="left:1124px;top:196px;width:320px;height:18px;background:#2b2b2b;border:1px solid #3a3a3a;border-radius:2px"></div>
<div class="a" style="left:1100px;top:220px;width:328px;height:283px;background:#2b2b2b"></div>
<div class="a b" style="left:1430px;top:221px;width:14px;height:15px;background:#4e4e4e"></div>
<div class="a" style="left:1430px;top:237px;width:14px;height:234px;background:#444;border:1px solid #5a5a5a"></div>
<div class="a b" style="left:1430px;top:473px;width:14px;height:15px;background:#4e4e4e"></div>
<div class="a b" style="left:1430px;top:489px;width:14px;height:15px;background:#4e4e4e"></div>
<div class="a b" style="left:1101px;top:506px;width:14px;height:14px;background:#4e4e4e"></div>
<div class="a" style="left:1117px;top:506px;width:278px;height:14px;background:#444;border:1px solid #5a5a5a"></div>
<div class="a b" style="left:1398px;top:506px;width:14px;height:14px;background:#4e4e4e"></div>
<div class="a b" style="left:1414px;top:506px;width:14px;height:14px;background:#4e4e4e"></div>
<svg class="o" viewBox="0 0 1920 1040" style="font-size:11px">
<rect x="1099" y="149" width="12" height="17" fill="#23272b"/><path d="M1102 163q-1-8 3-10 3 1 2 6-1 2-2 2" fill="none" stroke="#aaa"/>
<text x="1118" y="161" style="font-size:12.2px;fill:#000">Outliner</text>
<rect x="1355" y="152" width="11" height="3" fill="#fff"/>
<rect x="1383" y="148" width="10" height="9" fill="none" stroke="#222" stroke-width="1.500"/><rect x="1386" y="151" width="4" height="3" fill="#222"/>
<path d="M1420 147l10 9M1430 147l-10 9" stroke="#fff" stroke-width="3"/>
<text x="1106" y="187">Display</text><text x="1156" y="187">Show</text><text x="1196" y="187">Help</text>
<g fill="#555"><path d="M1102 198h5v3h-5zM1114 198h5v3h-5zM1102 210h5v3h-5zM1114 210h5v3h-5zM1107 201l4 3-4 3zM1115 201l-4 3 4 3z"/></g>
<use href="#cam" x="1143" y="222" width="19" height="19"/><use href="#cam" x="1143" y="242" width="19" height="19"/><use href="#cam" x="1143" y="262" width="19" height="19"/><use href="#cam" x="1143" y="282" width="19" height="19"/>
<text x="1172" y="234" class="g">persp</text><text x="1173" y="254" class="g">top</text><text x="1173" y="274" class="g">front</text><text x="1172" y="294" class="g">side</text>
<rect x="1102" y="306" width="11" height="11" fill="none" stroke="#bbb"/><path d="M1104 311.500h7" stroke="#ccc"/>
<path d="M1150 304l13-1-5 15-13 1z" fill="#eee" stroke="#222" stroke-width=".5"/><path d="M1144 311h10" stroke="#c81818" stroke-width="1.500"/><path d="M1151 308l6 3-6 3z" fill="#c81818"/>
<g fill="none" stroke="#ccc"><circle cx="1165.500" cy="311" r="2"/><circle cx="1185.500" cy="330.500" r="2"/><circle cx="1185.500" cy="350.500" r="2"/><circle cx="1185.500" cy="370.500" r="2"/><path d="M1165.500 313V370.500H1183M1165.500 330.500H1183M1165.500 350.500H1183"/></g>
<g fill="#9a9a9a" stroke="#222" stroke-width=".5"><path d="M1143 330l10-6 11 6-10 7z"/><path d="M1143 350l10-6 11 6-10 7z"/><path d="M1143 370l10-6 11 6-10 7z"/></g>
<g stroke="#1a1a1a" stroke-dasharray="2 1.500"><path d="M1147 327l11 7M1158 326l-11 8M1147 347l11 7M1158 346l-11 8M1147 367l11 7M1158 366l-11 8M1145 330h17M1145 350h17M1145 370h17"/></g>
<g><circle cx="1152" cy="390" r="8" fill="#222" stroke="#aaa"/><circle cx="1150" cy="392" r="3.500" fill="#c8b070"/><path d="M1152 385h4v8h-3z" fill="#5ea0dc"/><circle cx="1152" cy="410" r="8" fill="#222" stroke="#aaa"/><circle cx="1150" cy="412" r="3.500" fill="#c8b070"/><path d="M1152 405h4v8h-3z" fill="#5ea0dc"/></g>
<g style="fill:#d8d8d8"><text x="1172" y="314" style="fill:#d8d8d8;font-size:11px" textLength="67" lengthAdjust="spacingAndGlyphs">Roman_Shield</text><text x="1192" y="334" style="fill:#d8d8d8;font-size:11px">shild</text><text x="1192" y="354" style="fill:#d8d8d8;font-size:11px">wood</text><text x="1192" y="374" style="fill:#d8d8d8;font-size:11px">metal</text>
<text x="1172" y="394" style="fill:#d8d8d8;font-size:11px">defaultLightSet</text><text x="1172" y="414" style="fill:#d8d8d8;font-size:11px">defaultObjectSet</text></g>
<path d="M1433 230l4-4 4 4zM1433 482l4-4 4 4z" fill="#ccc"/><path d="M1433 495h8l-4 4z" fill="#ccc"/>
<path d="M1110 509v8l-5-4zM1418 509l5 4-5 4z" fill="#ccc" stroke="#ccc" stroke-width=".3"/><path d="M1405 509v8l-5-4z" fill="#ccc"/>
<g fill="#6a6a6a"><path d="M1432 345h10v1h-10zM1432 350h10v1h-10zM1432 355h10v1h-10zM1432 360h10v1h-10z"/></g>
<path d="M1248 509h14M1248 513h14M1248 517h14" stroke="#666" stroke-dasharray="1 2"/>
<path d="M1215 524h125" stroke="#666" stroke-width="2" stroke-dasharray="2 2"/>
</svg>
</body></html>
